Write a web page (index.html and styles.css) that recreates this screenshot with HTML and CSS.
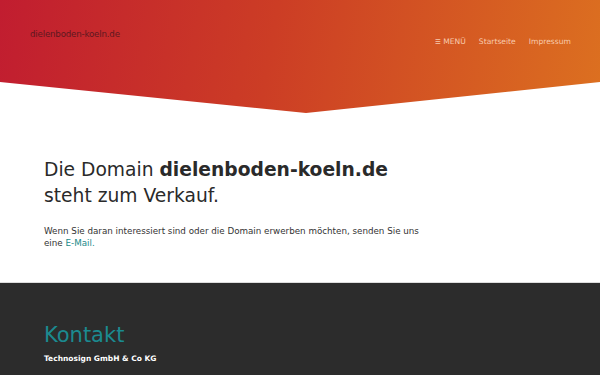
FILE: index.html
```html
<!DOCTYPE html>
<html lang="de">
<head>
    <meta charset="UTF-8">
    <meta name="viewport" content="width=device-width, initial-scale=1.0">
    <title>dielenboden-koeln.de</title>
    <link rel="stylesheet" href="styles.css">
</head>
<body>
    <header id="site-header">
        <div id="header-bar">
            <div id="logo">dielenboden-koeln.de</div>
            <nav id="main-nav">
                <a href="#"><span class="burger">&#9776;</span> MENÜ</a>
                <a href="#">Startseite</a>
                <a href="#">Impressum</a>
            </nav>
        </div>
    </header>

    <main id="content">
        <h1>Die Domain <strong>dielenboden-koeln.de</strong><br>steht zum Verkauf.</h1>
        <p>Wenn Sie daran interessiert sind oder die Domain erwerben möchten, senden Sie uns eine <a href="#">E-Mail.</a></p>
    </main>

    <footer id="site-footer">
        <h2>Kontakt</h2>
        <div class="company">Technosign GmbH &amp; Co KG</div>
    </footer>
</body>
</html>
```

FILE: styles.css
```css
html, body {
    overflow: hidden;
}

body {
    margin: 0;
    font-family: "DejaVu Sans", sans-serif;
    color: #333;
    background-color: #fff;
}

#site-header {
    height: 113px;
    background: linear-gradient(100deg, #c11d30 0%, #cc3d25 45%, #dc7020 100%);
    clip-path: polygon(0 0, 100% 0, 100% 82px, 51% 113px, 0 82px);
}

#header-bar {
    display: flex;
    justify-content: space-between;
    align-items: flex-start;
    padding: 29px 29px 0 30px;
}

#logo {
    font-size: 8.7px;
    color: #5e1820;
    letter-spacing: -0.2px;
}

#main-nav {
    display: flex;
    gap: 13px;
    margin-top: 8px;
}

#main-nav a {
    font-size: 7.6px;
    color: #f8cbae;
    text-decoration: none;
}

#main-nav .burger {
    font-size: 6.5px;
}

#content {
    padding: 44px 44px 33px;
}

h1 {
    margin: 0;
    font-size: 18.7px;
    font-weight: normal;
    line-height: 26px;
    color: #2a2a2a;
}

h1 strong {
    font-weight: bold;
}

#content p {
    margin: 16px 0 0;
    font-size: 8.74px;
    line-height: 12px;
    color: #333;
    width: 385px;
}

#content p a {
    color: #1a8a8a;
    text-decoration: none;
}

#site-footer {
    border-top: 1px solid #ddd;
    background-color: #2c2c2c;
    padding: 40px 44px 20px;
    height: 200px;
}

#site-footer h2 {
    margin: 0;
    font-size: 21px;
    font-weight: normal;
    color: #1b8a90;
    line-height: 24px;
}

#site-footer .company {
    margin-top: 7px;
    font-size: 7.5px;
    font-weight: bold;
    color: #fff;
}
```
